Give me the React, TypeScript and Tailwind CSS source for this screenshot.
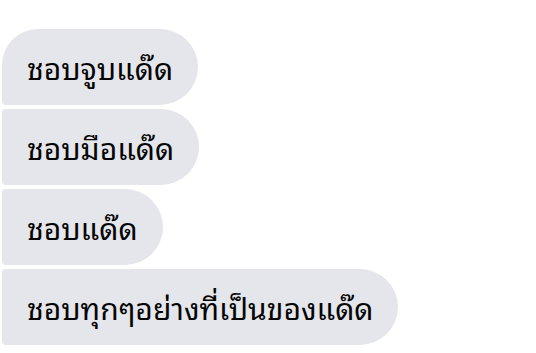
import React from "react";

const msgs = [
  { text: "ชอบจูบแด๊ด", cls: "rounded-tl-[36px] rounded-bl-[4px]" },
  { text: "ชอบมือแด๊ด", cls: "rounded-tl-[4px] rounded-bl-[4px]" },
  { text: "ชอบแด๊ด", cls: "rounded-tl-[4px] rounded-bl-[4px]" },
  { text: "ชอบทุกๆอย่างที่เป็นของแด๊ด", cls: "rounded-tl-[4px] rounded-bl-[4px]" },
];

export default function App() {
  return (
    <div className="w-[536px] h-[353px] bg-white overflow-hidden pt-[29px] pl-[2px] flex flex-col items-start gap-[4px] font-['Noto_Sans_Thai_Looped','Noto_Sans',sans-serif]">
      {msgs.map((m, i) => (
        <div
          key={i}
          className={`h-[76px] flex items-center px-[25px] bg-[#e4e6eb] text-[#050505] text-[30px] leading-none rounded-tr-[38px] rounded-br-[38px] ${m.cls}`}
        >
          {m.text}
        </div>
      ))}
    </div>
  );
}
